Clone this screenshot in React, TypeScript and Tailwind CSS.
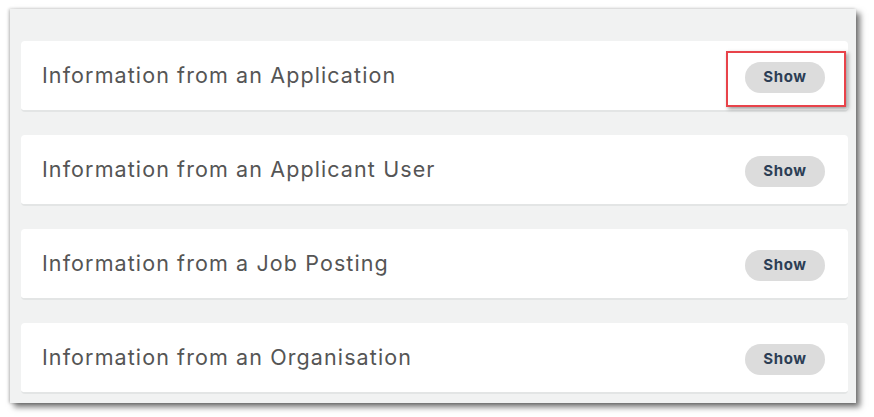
import React from "react";

const rows = [
  "Information from an Application",
  "Information from an Applicant User",
  "Information from a Job Posting",
  "Information from an Organisation",
];

export default function App() {
  return (
    <div className="w-[874px] h-[417px] bg-white overflow-hidden pt-[9px] pl-[10px]" style={{ fontFamily: "Inter, 'Noto Sans', sans-serif" }}>
      <div className="relative w-[846px] h-[394px] bg-[#f1f2f2] shadow-[4px_4px_6px_rgba(0,0,0,0.55),-1px_0_3px_rgba(0,0,0,0.25)] pt-[32px] pl-[11px] pr-[8px] flex flex-col gap-[23px]">
        {rows.map((r) => (
          <div key={r} className="h-[71px] bg-white rounded-[4px] border-b-2 border-[#e3e5e5] flex items-center justify-between pl-[21px] pr-[23px]">
            <span className="text-[21.5px] text-[#555555] tracking-[1.1px]">{r}</span>
            <button className="w-[80px] h-[31px] rounded-full bg-[#dcdcdc] text-[15px] font-bold tracking-[0.6px] text-[#2c3e55] mt-[3px]">Show</button>
          </div>
        ))}
        <div className="absolute left-[716px] top-[42px] w-[120px] h-[56px] border-2 border-[#e8434a] shadow-[2px_2px_4px_rgba(0,0,0,0.4)]"></div>
      </div>
    </div>
  );
}
